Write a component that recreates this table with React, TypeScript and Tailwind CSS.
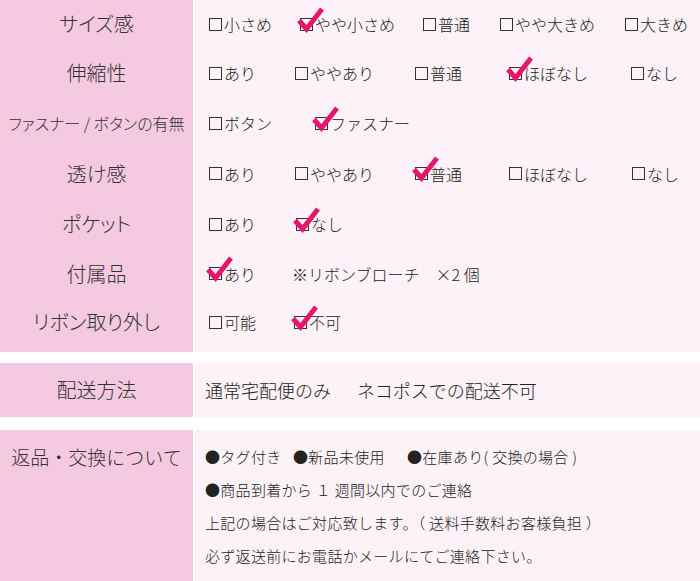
// Product spec table (size / stretch / options) with pink label column

function Box({ checked = false }: { checked?: boolean }) {
  return (
    <span className="relative inline-block w-[13px] h-[13px] border-[1.5px] border-[#333] shrink-0">
      {checked && (
        <svg
          className="absolute left-[-5px] top-[-11px] w-[28px] h-[24px] overflow-visible"
          viewBox="0 0 28 24"
        >
          <path d="M3 12.5 L10.5 21 L26 1" stroke="#e5176c" strokeWidth="5" fill="none" strokeLinejoin="miter" />
        </svg>
      )}
    </span>
  );
}

function Opt({ label, checked = false, className = '' }: { label: string; checked?: boolean; className?: string }) {
  return (
    <span className={`flex items-center shrink-0 ${className}`}>
      <Box checked={checked} />
      <span className="ml-[2px]">{label}</span>
    </span>
  );
}

export default function App() {
  return (
    <div className="w-[700px] bg-white font-['Noto_Sans_CJK_JP','Noto_Sans',sans-serif] font-light text-[#222] leading-none">
      {/* Spec rows */}
      <div className="flex gap-[2px]">
        <div className="w-[193px] shrink-0 bg-[#f5c9df] flex flex-col pb-[6px] text-[#333] [font-feature-settings:'palt']">
          <div className="h-[48px] flex items-center justify-center text-[20px]">サイズ感</div>
          <div className="h-[50px] flex items-center justify-center text-[20px]">伸縮性</div>
          <div className="h-[50px] flex items-center justify-center text-[16px]">ファスナー / ボタンの有無</div>
          <div className="h-[51px] flex items-center justify-center text-[20px]">透け感</div>
          <div className="h-[50px] flex items-center justify-center text-[20px]">ポケット</div>
          <div className="h-[49px] flex items-center justify-center text-[20px]">付属品</div>
          <div className="h-[48px] flex items-center justify-center text-[20px]">リボン取り外し</div>
        </div>
        <div className="flex-1 bg-[#fdf2f7] flex flex-col pb-[6px] pl-[14px] text-[16px]">
          <div className="h-[48px] flex items-center">
            <Opt label="小さめ" className="w-[91px]" />
            <Opt label="やや小さめ" checked className="w-[123px]" />
            <Opt label="普通" className="w-[77px]" />
            <Opt label="やや大きめ" className="w-[125px]" />
            <Opt label="大きめ" />
          </div>
          <div className="h-[50px] flex items-center">
            <Opt label="あり" className="w-[86px]" />
            <Opt label="ややあり" className="w-[120px]" />
            <Opt label="普通" className="w-[94px]" />
            <Opt label="ほぼなし" checked className="w-[122px]" />
            <Opt label="なし" />
          </div>
          <div className="h-[50px] flex items-center">
            <Opt label="ボタン" className="w-[106px]" />
            <Opt label="ファスナー" checked />
          </div>
          <div className="h-[51px] flex items-center">
            <Opt label="あり" className="w-[86px]" />
            <Opt label="ややあり" className="w-[120px]" />
            <Opt label="普通" checked className="w-[94px]" />
            <Opt label="ほぼなし" className="w-[123px]" />
            <Opt label="なし" />
          </div>
          <div className="h-[50px] flex items-center">
            <Opt label="あり" className="w-[87px]" />
            <Opt label="なし" checked />
          </div>
          <div className="h-[49px] flex items-center">
            <Opt label="あり" checked className="w-[83px]" />
            <span>※リボンブローチ</span>
            <span className="ml-[16px]">×2 個</span>
          </div>
          <div className="h-[48px] flex items-center">
            <Opt label="可能" className="w-[85px]" />
            <Opt label="不可" checked />
          </div>
        </div>
      </div>

      {/* Shipping */}
      <div className="flex gap-[2px] mt-[11px] h-[54px]">
        <div className="w-[193px] shrink-0 bg-[#f5c9df] flex items-center justify-center text-[20px] text-[#333]">
          配送方法
        </div>
        <div className="flex-1 bg-[#fdf2f7] flex items-center pl-[10px] text-[18px]">
          <span>通常宅配便のみ</span>
          <span className="ml-[26px]">ネコポスでの配送不可</span>
        </div>
      </div>

      {/* Returns */}
      <div className="flex gap-[2px] mt-[13px] h-[151px]">
        <div className="w-[193px] shrink-0 bg-[#f5c9df] pt-[17px] text-center text-[19px] text-[#333]">
          返品・交換について
        </div>
        <div className="flex-1 bg-[#fdf2f7] pl-[10px] pt-[10px] text-[15px] tracking-[0.3px] leading-[33px]">
          <div className="flex">
            <span className="w-[88px]">●タグ付き</span>
            <span className="w-[114px]">●新品未使用</span>
            <span>●在庫あり( 交換の場合 )</span>
          </div>
          <div>●商品到着から １ 週間以内でのご連絡</div>
          <div>上記の場合はご対応致します。（ 送料手数料お客様負担 ）</div>
          <div>必ず返送前にお電話かメールにてご連絡下さい。</div>
        </div>
      </div>
    </div>
  );
}
